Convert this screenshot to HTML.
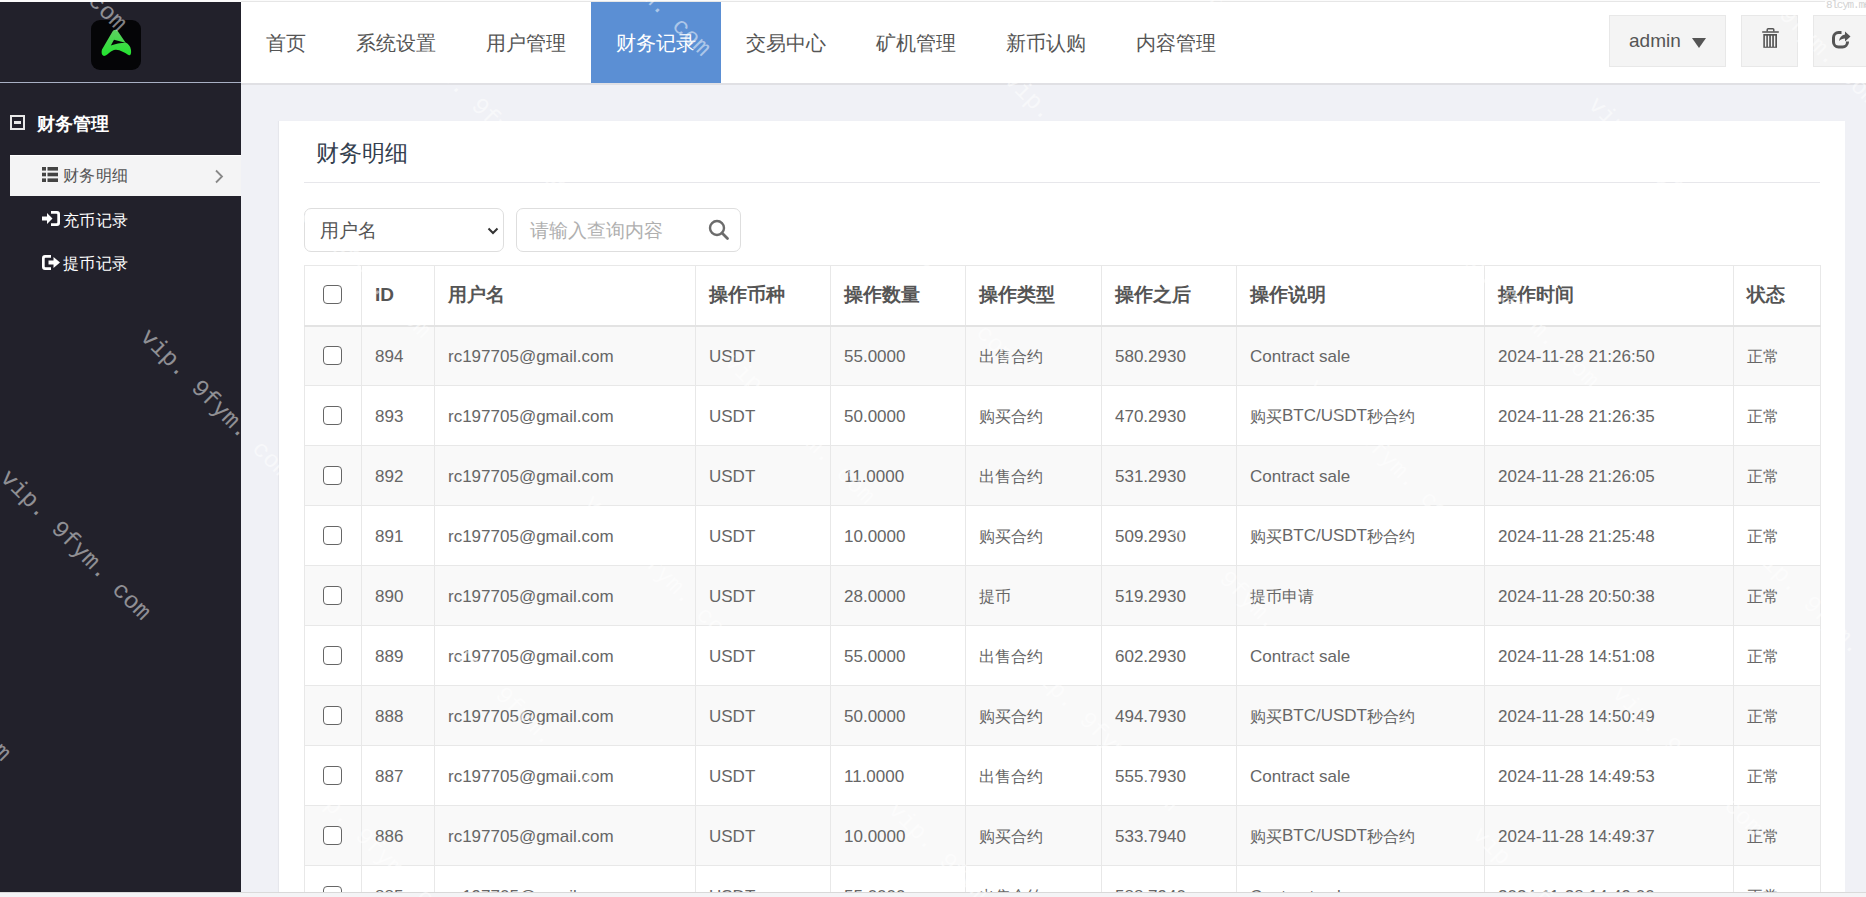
<!DOCTYPE html>
<html><head><meta charset="utf-8">
<style>
*{margin:0;padding:0;box-sizing:border-box}
html,body{width:1866px;height:897px;overflow:hidden;background:#fff;font-family:"Liberation Sans",sans-serif}
.abs{position:absolute}
#top{left:0;top:0;width:1866px;height:2px;background:#fbfbfb}
#topl{left:241px;top:1px;width:1584px;height:1px;background:#e6e6e6}
#wmk{z-index:5;left:1826px;top:0px;line-height:11px;font-family:"Liberation Mono",monospace;font-size:11px;color:#d2d2d2;letter-spacing:-1.2px}
#side{left:0;top:2px;width:241px;height:890px;background:#22212b}
#sideline{left:0;top:82px;width:241px;height:1px;background:#a9b0c4}
#logo{left:91px;top:20px;width:50px;height:50px}
#hdr{left:241px;top:2px;width:1625px;height:81px;background:#fff}
#hdrsh{left:241px;top:83px;width:1625px;height:2px;background:#e0e0e4}
#main{left:241px;top:85px;width:1625px;height:807px;background:#f0f1f6}
#bot{left:0;top:892px;width:1866px;height:5px;background:#f4f4f6;border-top:1px solid #dadada}
.nav{top:2px;height:81px;line-height:82px;font-size:20px;color:#555;text-align:center;width:130px}
.nav.act{background:#5b8fd4;color:#fff}
.hbtn{top:15px;height:52px;background:#f4f4f4;border:1px solid #e8e8e8}
#admin{left:1609px;width:117px;font-size:19px;color:#555;line-height:50px;padding-left:19px}
#admin .tri{position:absolute;left:82px;top:22px;width:0;height:0;border-left:7px solid transparent;border-right:7px solid transparent;border-top:10px solid #555}
#trash{left:1741px;width:57px}
#refr{left:1813px;width:60px}
#grp{left:10px;top:115px;width:15px;height:15px;border:2px solid #e8e8e8;background:#22212b}
#grp:after{content:"";position:absolute;left:2px;top:4px;width:7px;height:3px;background:#e8e8e8}
#grpt{left:37px;top:113px;font-size:18px;font-weight:bold;color:#fff;line-height:22px}
#act{left:10px;top:155px;width:231px;height:41px;background:#f4f4f5;border-top:1px solid #fff}
.si{left:63px;font-size:16px;line-height:20px;letter-spacing:0.4px}
#card{left:279px;top:121px;width:1566px;height:771px;background:#fff;box-shadow:-1px 0 1px rgba(0,0,0,0.04)}
#title{left:316px;top:138px;font-size:23px;color:#34404f;line-height:30px}
#hline{left:304px;top:182px;width:1516px;height:1px;background:#e7e7eb}
.inp{top:208px;height:44px;border:1px solid #dedede;border-radius:7px;background:#fff}
#tbl{left:304px;top:265px;width:1520px;height:627px;overflow:hidden}
table{border-collapse:collapse;width:1516px;table-layout:fixed}
td,th{border:1px solid #e8e8e8;height:60px;font-size:17px;color:#666;text-align:left;padding:0 0 0 13px;white-space:nowrap;overflow:hidden}
th{font-weight:bold;color:#555;font-size:19px;background:#fff}
td .cn{font-size:16px;position:relative;top:1px}
td{padding-top:2px}
.cb{position:relative;top:-2px}
thead tr{border-bottom:2px solid #e3e3e3}
tbody tr:nth-child(odd) td{background:#f9f9f9}
tbody tr:nth-child(even) td{background:#fff}
td.c0,th.c0{padding-left:18px}
.cb{display:inline-block;width:19px;height:19px;border:1.6px solid #666;border-radius:4px;vertical-align:middle;background:#fff}
.wm{position:absolute;font-family:"Liberation Mono",monospace;font-size:24px;line-height:24px;color:rgba(255,255,255,0.5);transform-origin:0 0;transform:rotate(45deg);white-space:pre;letter-spacing:0px;margin-left:8px;margin-top:-6px}
</style></head><body>
<div id="top" class="abs"></div>
<div id="topl" class="abs"></div>
<div id="wmk" class="abs">8lcym.me</div>
<div id="side" class="abs"></div>
<div id="sideline" class="abs"></div>
<svg id="logo" class="abs" viewBox="0 0 50 50" width="50" height="50">
<defs><linearGradient id="g1" x1="0" y1="0" x2="0" y2="1"><stop offset="0" stop-color="#5fd062"/><stop offset="1" stop-color="#22e42e"/></linearGradient></defs>
<rect x="0" y="0" width="50" height="50" rx="9" fill="#050507"/>
<path fill-rule="evenodd" d="M24,10 C25,9.5 26,10 27,11.5 L34.5,22.5 C37,23.5 39.5,26 40,30 C40.5,34 39.5,36 37.5,35 C34,33 29,29.5 24.5,29.8 C20,30 17,35 14,35.8 C11,36.5 10,33 11,29.5 L21.5,11.5 C22.3,10.3 23,10 24,10 Z M23,19.8 L34.5,22.8 C30,23 24,24 19.8,25.5 Z" fill="url(#g1)"/>
</svg>
<div id="hdr" class="abs"></div>
<div id="hdrsh" class="abs"></div>
<div id="main" class="abs"></div>
<div id="bot" class="abs"></div>

<div class="abs nav" style="left:241px;width:90px">首页</div>
<div class="abs nav" style="left:331px">系统设置</div>
<div class="abs nav" style="left:461px">用户管理</div>
<div class="abs nav act" style="left:591px">财务记录</div>
<div class="abs nav" style="left:721px">交易中心</div>
<div class="abs nav" style="left:851px">矿机管理</div>
<div class="abs nav" style="left:981px">新币认购</div>
<div class="abs nav" style="left:1111px">内容管理</div>

<div id="admin" class="abs hbtn">admin<span class="tri"></span></div>
<div id="trash" class="abs hbtn">
<svg class="abs" style="left:20px;top:12px" width="17" height="21" viewBox="0 0 17 21"><path d="M0.2,4 h16.6" stroke="#555" stroke-width="1.5" fill="none"/><path d="M5.2,3.6 v-1.8 a1,1 0 0 1 1,-1 h4.6 a1,1 0 0 1 1,1 v1.8" stroke="#555" stroke-width="1.5" fill="none"/><rect x="1.3" y="6" width="13.7" height="13.8" fill="#555"/><rect x="2.9" y="7.7" width="1.4" height="11" fill="#f4f4f4"/><rect x="5.9" y="7.7" width="1.3" height="11" fill="#f4f4f4"/><rect x="8.9" y="7.7" width="1.3" height="11" fill="#f4f4f4"/><rect x="11.9" y="7.7" width="1.4" height="11" fill="#f4f4f4"/></svg>
</div>
<div id="refr" class="abs hbtn">
<svg class="abs" style="left:18px;top:15px" width="19" height="18" viewBox="0 0 19 18"><path d="M9.5,1.5 H6.5 a5,5 0 0 0 -5,5 V11 a5,5 0 0 0 5,5 H10.5 a5,5 0 0 0 5,-5 V10.5" stroke="#555" stroke-width="3" fill="none"/><path d="M13,0.5 L18.5,5.5 L13,10.5 V7.5 C10.5,7.5 8.5,8.5 7,10 C7.5,6.5 9.5,4 13,3.5 Z" fill="#555"/></svg>
</div>

<div id="grp" class="abs"></div>
<div id="grpt" class="abs">财务管理</div>
<div id="act" class="abs"></div>
<svg class="abs" style="left:42px;top:167px" width="16" height="15" viewBox="0 0 16 15"><g fill="#444"><rect x="0" y="0" width="4" height="3.6"/><rect x="5.5" y="0" width="10.5" height="3.6"/><rect x="0" y="5.7" width="4" height="3.6"/><rect x="5.5" y="5.7" width="10.5" height="3.6"/><rect x="0" y="11.4" width="4" height="3.6"/><rect x="5.5" y="11.4" width="10.5" height="3.6"/></g></svg>
<div class="abs si" style="top:166px;color:#555">财务明细</div>
<svg class="abs" style="left:214px;top:169px" width="10" height="15" viewBox="0 0 10 15"><path d="M2,1.5 L8,7.5 L2,13.5" stroke="#888" stroke-width="1.8" fill="none"/></svg>
<svg class="abs" style="left:42px;top:211px" width="18" height="15" viewBox="0 0 18 15"><g fill="#fff"><path d="M0,5.5 h5 v-3.5 l5.5,5.5 l-5.5,5.5 v-3.5 h-5 z"/><path d="M9,0 h6 a3,3 0 0 1 3,3 v9 a3,3 0 0 1 -3,3 h-6 v-2.8 h5.5 a0.8,0.8 0 0 0 0.8,-0.8 v-7.8 a0.8,0.8 0 0 0 -0.8,-0.8 h-5.5 z"/></g></svg>
<div class="abs si" style="top:211px;color:#fff">充币记录</div>
<svg class="abs" style="left:42px;top:255px" width="18" height="15" viewBox="0 0 18 15"><g fill="#fff"><path d="M9,0 h-6 a3,3 0 0 0 -3,3 v9 a3,3 0 0 0 3,3 h6 v-2.8 h-5.5 a0.8,0.8 0 0 1 -0.8,-0.8 v-7.8 a0.8,0.8 0 0 1 0.8,-0.8 h5.5 z"/><path d="M6.5,5.5 h5 v-3.5 l6.5,5.5 l-6.5,5.5 v-3.5 h-5 z"/></g></svg>
<div class="abs si" style="top:254px;color:#fff">提币记录</div>

<div id="card" class="abs"></div>
<div id="title" class="abs">财务明细</div>
<div id="hline" class="abs"></div>
<div class="abs inp" style="left:304px;width:200px"><div class="abs" style="left:15px;top:11px;font-size:19px;color:#555;line-height:22px">用户名</div>
<svg class="abs" style="left:182px;top:18px" width="12" height="8" viewBox="0 0 12 8"><path d="M1.5,1.5 L6,6 L10.5,1.5" stroke="#333" stroke-width="2" fill="none"/></svg></div>
<div class="abs inp" style="left:516px;width:225px"><div class="abs" style="left:13px;top:11px;font-size:19px;color:#b0b0b0;line-height:22px">请输入查询内容</div>
<svg class="abs" style="left:191px;top:10px" width="22" height="22" viewBox="0 0 22 22"><circle cx="9" cy="9" r="7" stroke="#6c6c6c" stroke-width="2.4" fill="none"/><path d="M14,14 L19.5,19.5" stroke="#6c6c6c" stroke-width="2.8" stroke-linecap="round"/></svg></div>

<div id="tbl" class="abs">
<table>
<colgroup><col style="width:57px"><col style="width:73px"><col style="width:261px"><col style="width:135px"><col style="width:135px"><col style="width:136px"><col style="width:135px"><col style="width:248px"><col style="width:249px"><col style="width:87px"></colgroup>
<thead><tr><th class="c0"><span class="cb"></span></th><th>ID</th><th>用户名</th><th>操作币种</th><th>操作数量</th><th>操作类型</th><th>操作之后</th><th>操作说明</th><th>操作时间</th><th>状态</th></tr></thead>
<tbody>
<tr><td class="c0"><span class="cb"></span></td><td>894</td><td>rc197705@gmail.com</td><td>USDT</td><td>55.0000</td><td><span class="cn">出售合约</span></td><td>580.2930</td><td>Contract sale</td><td>2024-11-28 21:26:50</td><td><span class="cn">正常</span></td></tr>
<tr><td class="c0"><span class="cb"></span></td><td>893</td><td>rc197705@gmail.com</td><td>USDT</td><td>50.0000</td><td><span class="cn">购买合约</span></td><td>470.2930</td><td><span class="cn">购买</span>BTC/USDT<span class="cn">秒合约</span></td><td>2024-11-28 21:26:35</td><td><span class="cn">正常</span></td></tr>
<tr><td class="c0"><span class="cb"></span></td><td>892</td><td>rc197705@gmail.com</td><td>USDT</td><td>11.0000</td><td><span class="cn">出售合约</span></td><td>531.2930</td><td>Contract sale</td><td>2024-11-28 21:26:05</td><td><span class="cn">正常</span></td></tr>
<tr><td class="c0"><span class="cb"></span></td><td>891</td><td>rc197705@gmail.com</td><td>USDT</td><td>10.0000</td><td><span class="cn">购买合约</span></td><td>509.2930</td><td><span class="cn">购买</span>BTC/USDT<span class="cn">秒合约</span></td><td>2024-11-28 21:25:48</td><td><span class="cn">正常</span></td></tr>
<tr><td class="c0"><span class="cb"></span></td><td>890</td><td>rc197705@gmail.com</td><td>USDT</td><td>28.0000</td><td><span class="cn">提币</span></td><td>519.2930</td><td><span class="cn">提币申请</span></td><td>2024-11-28 20:50:38</td><td><span class="cn">正常</span></td></tr>
<tr><td class="c0"><span class="cb"></span></td><td>889</td><td>rc197705@gmail.com</td><td>USDT</td><td>55.0000</td><td><span class="cn">出售合约</span></td><td>602.2930</td><td>Contract sale</td><td>2024-11-28 14:51:08</td><td><span class="cn">正常</span></td></tr>
<tr><td class="c0"><span class="cb"></span></td><td>888</td><td>rc197705@gmail.com</td><td>USDT</td><td>50.0000</td><td><span class="cn">购买合约</span></td><td>494.7930</td><td><span class="cn">购买</span>BTC/USDT<span class="cn">秒合约</span></td><td>2024-11-28 14:50:49</td><td><span class="cn">正常</span></td></tr>
<tr><td class="c0"><span class="cb"></span></td><td>887</td><td>rc197705@gmail.com</td><td>USDT</td><td>11.0000</td><td><span class="cn">出售合约</span></td><td>555.7930</td><td>Contract sale</td><td>2024-11-28 14:49:53</td><td><span class="cn">正常</span></td></tr>
<tr><td class="c0"><span class="cb"></span></td><td>886</td><td>rc197705@gmail.com</td><td>USDT</td><td>10.0000</td><td><span class="cn">购买合约</span></td><td>533.7940</td><td><span class="cn">购买</span>BTC/USDT<span class="cn">秒合约</span></td><td>2024-11-28 14:49:37</td><td><span class="cn">正常</span></td></tr>
<tr><td class="c0"><span class="cb"></span></td><td>885</td><td>rc197705@gmail.com</td><td>USDT</td><td>55.0000</td><td><span class="cn">出售合约</span></td><td>588.7940</td><td>Contract sale</td><td>2024-11-28 14:49:00</td><td><span class="cn">正常</span></td></tr></tbody>
</table>
</div>
<div class="wm" style="left:308px;top:779px">vip. 9fym. com</div>
<div class="wm" style="left:892px;top:804px">vip. 9fym. com</div>
<div class="wm" style="left:1476px;top:829px">vip. 9fym. com</div>
<div class="wm" style="left:-136px;top:613px">vip. 9fym. com</div>
<div class="wm" style="left:448px;top:638px">vip. 9fym. com</div>
<div class="wm" style="left:1032px;top:663px">vip. 9fym. com</div>
<div class="wm" style="left:1616px;top:688px">vip. 9fym. com</div>
<div class="wm" style="left:4px;top:472px">vip. 9fym. com</div>
<div class="wm" style="left:588px;top:497px">vip. 9fym. com</div>
<div class="wm" style="left:1172px;top:522px">vip. 9fym. com</div>
<div class="wm" style="left:1756px;top:547px">vip. 9fym. com</div>
<div class="wm" style="left:144px;top:331px">vip. 9fym. com</div>
<div class="wm" style="left:728px;top:356px">vip. 9fym. com</div>
<div class="wm" style="left:1312px;top:381px">vip. 9fym. com</div>
<div class="wm" style="left:284px;top:190px">vip. 9fym. com</div>
<div class="wm" style="left:868px;top:215px">vip. 9fym. com</div>
<div class="wm" style="left:1452px;top:240px">vip. 9fym. com</div>
<div class="wm" style="left:-160px;top:24px">vip. 9fym. com</div>
<div class="wm" style="left:424px;top:49px">vip. 9fym. com</div>
<div class="wm" style="left:1008px;top:74px">vip. 9fym. com</div>
<div class="wm" style="left:1592px;top:99px">vip. 9fym. com</div>
<div class="wm" style="left:-20px;top:-117px">vip. 9fym. com</div>
<div class="wm" style="left:564px;top:-92px">vip. 9fym. com</div>
<div class="wm" style="left:1148px;top:-67px">vip. 9fym. com</div>
<div class="wm" style="left:1732px;top:-42px">vip. 9fym. com</div></body></html>
